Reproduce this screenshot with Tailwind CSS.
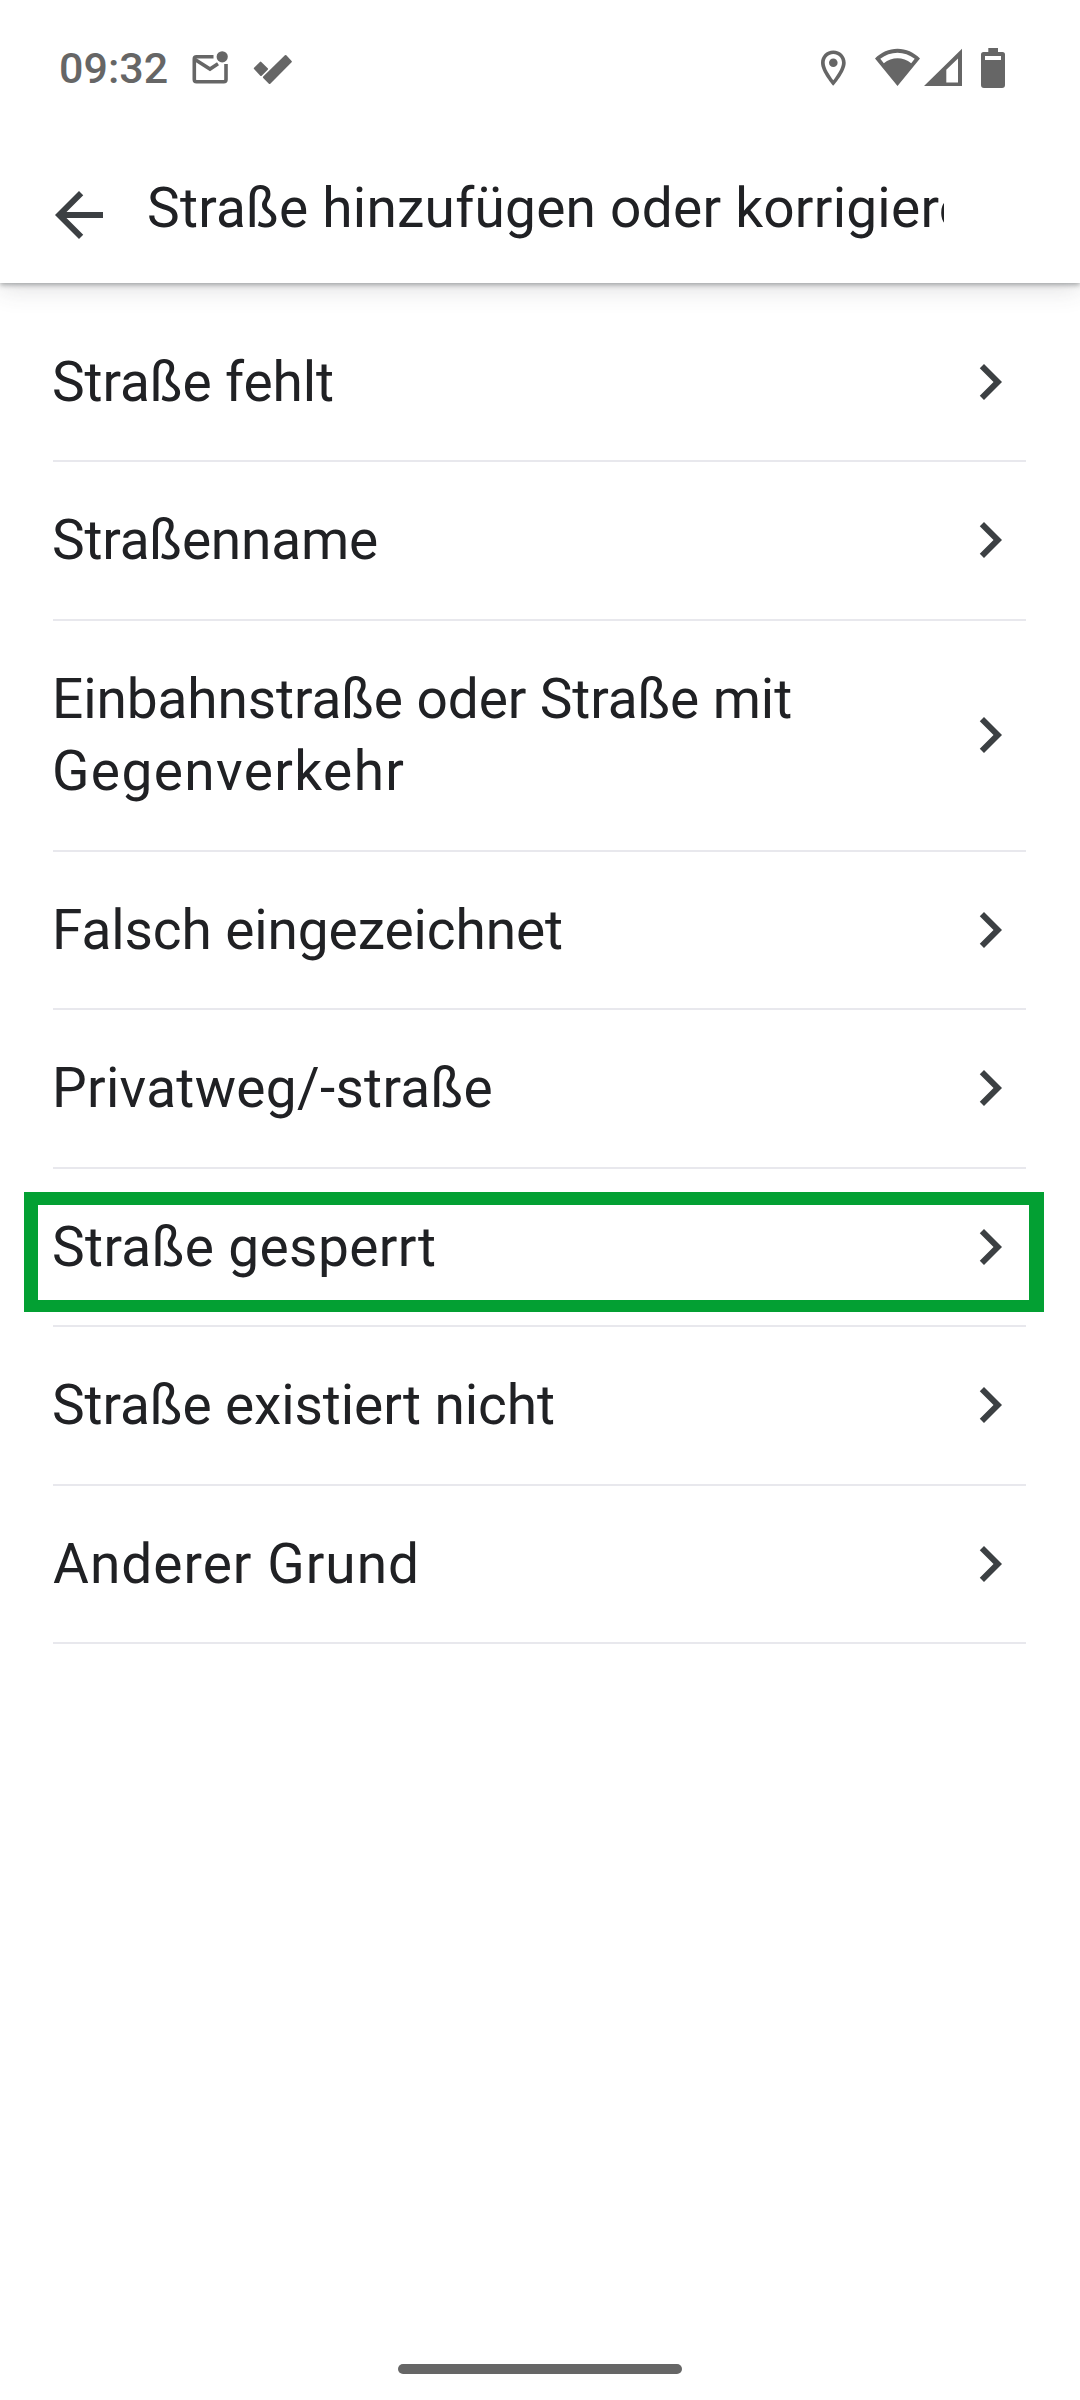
<!DOCTYPE html>
<html lang="de">
<head>
<meta charset="utf-8">
<title>Straße hinzufügen oder korrigieren</title>
<script src="https://cdn.jsdelivr.net/npm/@tailwindcss/browser@4"></script>
</head>
<body class="bg-white">
<svg class="hidden">
  <symbol id="chevron" viewBox="0 0 24 24"><path d="M10 6L8.59 7.41 13.17 12l-4.58 4.59L10 18l6-6z"/></symbol>
</svg>
<div class="flex h-[2400px] w-[1080px] flex-col overflow-hidden bg-white font-['Roboto',sans-serif] text-[#202124]">
  <header class="flex h-[283px] shrink-0 flex-col bg-white shadow-[0_2px_5px_rgba(60,64,67,0.42),0_6px_24px_rgba(60,64,67,0.16)]">
    <!-- Status bar -->
    <div class="flex h-[136px] items-center justify-between pr-[74px] pl-[59px] text-[#666]">
      <div class="flex items-center">
        <span class="w-[131px] text-[43px] leading-[52px] font-medium">09:32</span>
        <svg class="h-10 w-[44px]" viewBox="190 48 44 40" fill="none" stroke="currentColor" stroke-width="3.6">
          <path d="M213.5 56.8H196.5Q194.3 56.8 194.3 59V79.5Q194.3 81.7 196.5 81.7H223.8Q226 81.7 226 79.5V64"/>
          <path d="M195 59.5L210 69L218 63.8"/>
          <circle cx="222.2" cy="56.8" r="5.6" fill="currentColor" stroke="none"/>
        </svg>
        <svg class="ml-[18px] h-10 w-[44px]" viewBox="252 48 44 40" fill="currentColor" stroke="currentColor" stroke-width="2" stroke-linejoin="round">
          <path d="M260.6 62.6L267 69L261 75L254.8 68.4Z"/>
          <path d="M285.6 56L290.9 61.6L269.6 83L263.9 77.3Z"/>
        </svg>
      </div>
      <svg class="h-10 w-[187px]" viewBox="819 48 187 40" fill="currentColor">
        <path fill-rule="evenodd" d="M833.3 50.5C826.4 50.5 821 56 821 62.8C821 72 833.3 85.8 833.3 85.8S845.7 72 845.7 62.8C845.7 56 840.2 50.5 833.3 50.5ZM833.3 54.1C838.2 54.1 842 58 842 62.8C842 68 836.8 75.8 833.3 80.3C829.9 75.8 824.7 68 824.7 62.8C824.7 58 828.5 54.1 833.3 54.1Z"/>
        <circle cx="833.3" cy="62.8" r="4.3"/>
        <path fill-rule="evenodd" d="M897.5 86L875 58.5C881 52.5 889 48.8 897.5 48.8S914 52.5 920 58.5ZM880.3 58.8L883.8 63.2C892 56.5 903 56.5 911.2 63.2L914.7 58.8C904.5 50.7 890.5 50.7 880.3 58.8Z"/>
        <path fill-rule="evenodd" d="M962 48.8V86H924ZM958 58.5L946.3 69.8V82.5H958Z"/>
        <path fill-rule="evenodd" d="M988.3 48H998V52H1002.5Q1005 52 1005 54.5V85Q1005 88 1002 88H984Q981 88 981 85V54.5Q981 52 983.5 52H988.3ZM985 56V60H1001V56Z"/>
      </svg>
    </div>
    <!-- App bar -->
    <div class="flex items-start pl-[43px]">
      <svg class="mt-[42.5px] size-[72px] fill-[#3c4043]" viewBox="0 0 24 24"><path d="M20 11H7.83l5.59-5.59L12 4l-8 8 8 8 1.41-1.41L7.83 13H20v-2z"/></svg>
      <h1 class="mt-9 ml-8 w-[797px] overflow-hidden text-[55px] leading-[72px] tracking-[0.24px] whitespace-nowrap">Straße hinzufügen oder korrigieren</h1>
    </div>
  </header>

  <!-- Options -->
  <ul class="mx-[53px] mt-[20.9px] w-[973px]">
    <li class="flex h-[158.5px] items-center justify-between border-b-2 border-[#e8e8ed] pb-px">
      <span class="-ml-px text-[55px] leading-[72px] tracking-[-0.09px]">Straße fehlt</span>
      <svg class="size-[72px] shrink-0 fill-[#3c4043]"><use href="#chevron"/></svg>
    </li>
    <li class="flex h-[158.5px] items-center justify-between border-b-2 border-[#e8e8ed] pb-[2px]">
      <span class="-ml-px text-[55px] leading-[72px] tracking-[-0.19px]">Straßenname</span>
      <svg class="size-[72px] shrink-0 fill-[#3c4043]"><use href="#chevron"/></svg>
    </li>
    <li class="flex h-[230.9px] items-center justify-between border-b-2 border-[#e8e8ed] pb-px">
      <span class="-ml-px text-[55px] leading-[72px] tracking-[-0.1px]">Einbahnstraße oder Straße mit<br><span class="tracking-[1.4px]">Gegenverkehr</span></span>
      <svg class="size-[72px] shrink-0 fill-[#3c4043]"><use href="#chevron"/></svg>
    </li>
    <li class="flex h-[158.5px] items-center justify-between border-b-2 border-[#e8e8ed] pb-px">
      <span class="-ml-px text-[55px] leading-[72px] tracking-[-0.1px]">Falsch eingezeichnet</span>
      <svg class="size-[72px] shrink-0 fill-[#3c4043]"><use href="#chevron"/></svg>
    </li>
    <li class="flex h-[158.5px] items-center justify-between border-b-2 border-[#e8e8ed] pb-[2px]">
      <span class="-ml-px text-[55px] leading-[72px] tracking-[0.3px]">Privatweg/-straße</span>
      <svg class="size-[72px] shrink-0 fill-[#3c4043]"><use href="#chevron"/></svg>
    </li>
    <li class="relative flex h-[158.5px] items-center justify-between border-b-2 border-[#e8e8ed] pb-px">
      <span class="-ml-px text-[55px] leading-[72px] tracking-[0.38px]">Straße gesperrt</span>
      <svg class="size-[72px] shrink-0 fill-[#3c4043]"><use href="#chevron"/></svg>
      <!-- Highlight frame -->
      <div class="absolute top-[23.2px] -left-[29px] h-[120px] w-[1020px] border-t-[13px] border-r-[15px] border-b-[12px] border-l-[14px] border-[#03a033]"></div>
    </li>
    <li class="flex h-[158.5px] items-center justify-between border-b-2 border-[#e8e8ed] pb-[2px]">
      <span class="-ml-px text-[55px] leading-[72px] tracking-[-0.09px]">Straße existiert nicht</span>
      <svg class="size-[72px] shrink-0 fill-[#3c4043]"><use href="#chevron"/></svg>
    </li>
    <li class="flex h-[158.5px] items-center justify-between border-b-2 border-[#e8e8ed] pb-px">
      <span class="text-[55px] leading-[72px] tracking-[1.02px]">Anderer Grund</span>
      <svg class="size-[72px] shrink-0 fill-[#3c4043]"><use href="#chevron"/></svg>
    </li>
  </ul>

  <!-- Gesture bar -->
  <div class="mx-auto mt-auto mb-[26px] h-[10px] w-[284px] rounded-full bg-[#666]"></div>
</div>
</body>
</html>
